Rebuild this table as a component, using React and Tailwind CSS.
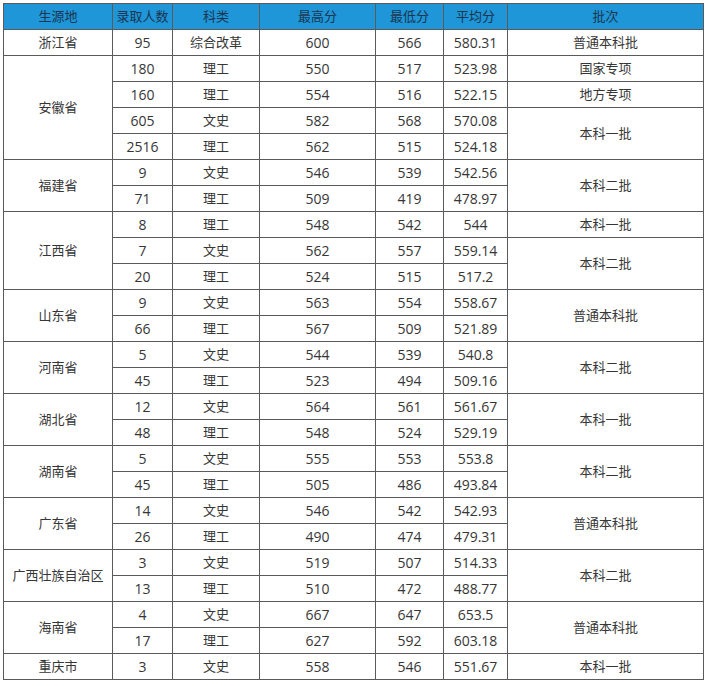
import React from "react";

// 每个省份: 名称 + 行数据 [人数, 科类, 最高, 最低, 平均]
const provinces = [
  { name: "浙江省", rows: [["95", "综合改革", "600", "566", "580.31"]], batches: [["普通本科批", 1]] },
  {
    name: "安徽省",
    rows: [
      ["180", "理工", "550", "517", "523.98"],
      ["160", "理工", "554", "516", "522.15"],
      ["605", "文史", "582", "568", "570.08"],
      ["2516", "理工", "562", "515", "524.18"],
    ],
    batches: [["国家专项", 1], ["地方专项", 1], ["本科一批", 2]],
  },
  {
    name: "福建省",
    rows: [
      ["9", "文史", "546", "539", "542.56"],
      ["71", "理工", "509", "419", "478.97"],
    ],
    batches: [["本科二批", 2]],
  },
  {
    name: "江西省",
    rows: [
      ["8", "理工", "548", "542", "544"],
      ["7", "文史", "562", "557", "559.14"],
      ["20", "理工", "524", "515", "517.2"],
    ],
    batches: [["本科一批", 1], ["本科二批", 2]],
  },
  {
    name: "山东省",
    rows: [
      ["9", "文史", "563", "554", "558.67"],
      ["66", "理工", "567", "509", "521.89"],
    ],
    batches: [["普通本科批", 2]],
  },
  {
    name: "河南省",
    rows: [
      ["5", "文史", "544", "539", "540.8"],
      ["45", "理工", "523", "494", "509.16"],
    ],
    batches: [["本科二批", 2]],
  },
  {
    name: "湖北省",
    rows: [
      ["12", "文史", "564", "561", "561.67"],
      ["48", "理工", "548", "524", "529.19"],
    ],
    batches: [["本科一批", 2]],
  },
  {
    name: "湖南省",
    rows: [
      ["5", "文史", "555", "553", "553.8"],
      ["45", "理工", "505", "486", "493.84"],
    ],
    batches: [["本科二批", 2]],
  },
  {
    name: "广东省",
    rows: [
      ["14", "文史", "546", "542", "542.93"],
      ["26", "理工", "490", "474", "479.31"],
    ],
    batches: [["普通本科批", 2]],
  },
  {
    name: "广西壮族自治区",
    rows: [
      ["3", "文史", "519", "507", "514.33"],
      ["13", "理工", "510", "472", "488.77"],
    ],
    batches: [["本科二批", 2]],
  },
  {
    name: "海南省",
    rows: [
      ["4", "文史", "667", "647", "653.5"],
      ["17", "理工", "627", "592", "603.18"],
    ],
    batches: [["普通本科批", 2]],
  },
  { name: "重庆市", rows: [["3", "文史", "558", "546", "551.67"]], batches: [["本科一批", 1]] },
];

const headers = ["生源地", "录取人数", "科类", "最高分", "最低分", "平均分", "批次"];
const widths = ["w-[109px]", "w-[60px]", "w-[87px]", "w-[116px]", "w-[68px]", "w-[64px]", "w-[196px]"];

const cell = "border border-[#5a5a5a] p-0 h-[26px] text-center align-middle";
const cjk = "text-[13px]";
const num = "text-[14px]";

export default function App() {
  // 批次列的起始行
  const batchStart = (batches) => {
    const map = {};
    let i = 0;
    batches.forEach(([label, span]) => {
      map[i] = [label, span];
      i += span;
    });
    return map;
  };

  return (
    <div className="w-[708px] h-[686px] bg-white pt-[3px] pl-[3px]" style={{ fontFamily: '"Open Sans", "Noto Sans CJK SC", sans-serif' }}>
      <table className="table-fixed border-collapse w-[700px] text-[#363636] border border-[#4a4a4a]">
        <colgroup>
          {widths.map((w, i) => (
            <col key={i} className={w} />
          ))}
        </colgroup>
        <thead>
          <tr className="bg-[#1e96d7]">
            {headers.map((h) => (
              <th key={h} className={`${cell} ${cjk} font-normal text-[#1d3550]`}>
                {h}
              </th>
            ))}
          </tr>
        </thead>
        <tbody>
          {provinces.map((p) => {
            const bs = batchStart(p.batches);
            return p.rows.map((r, i) => (
              <tr key={p.name + i}>
                {i === 0 && (
                  <td rowSpan={p.rows.length} className={`${cell} ${cjk}`}>
                    {p.name}
                  </td>
                )}
                {r.map((v, j) => (
                  <td key={j} className={`${cell} ${j === 1 ? cjk : num}`}>
                    {v}
                  </td>
                ))}
                {bs[i] && (
                  <td rowSpan={bs[i][1]} className={`${cell} ${cjk}`}>
                    {bs[i][0]}
                  </td>
                )}
              </tr>
            ));
          })}
        </tbody>
      </table>
    </div>
  );
}
